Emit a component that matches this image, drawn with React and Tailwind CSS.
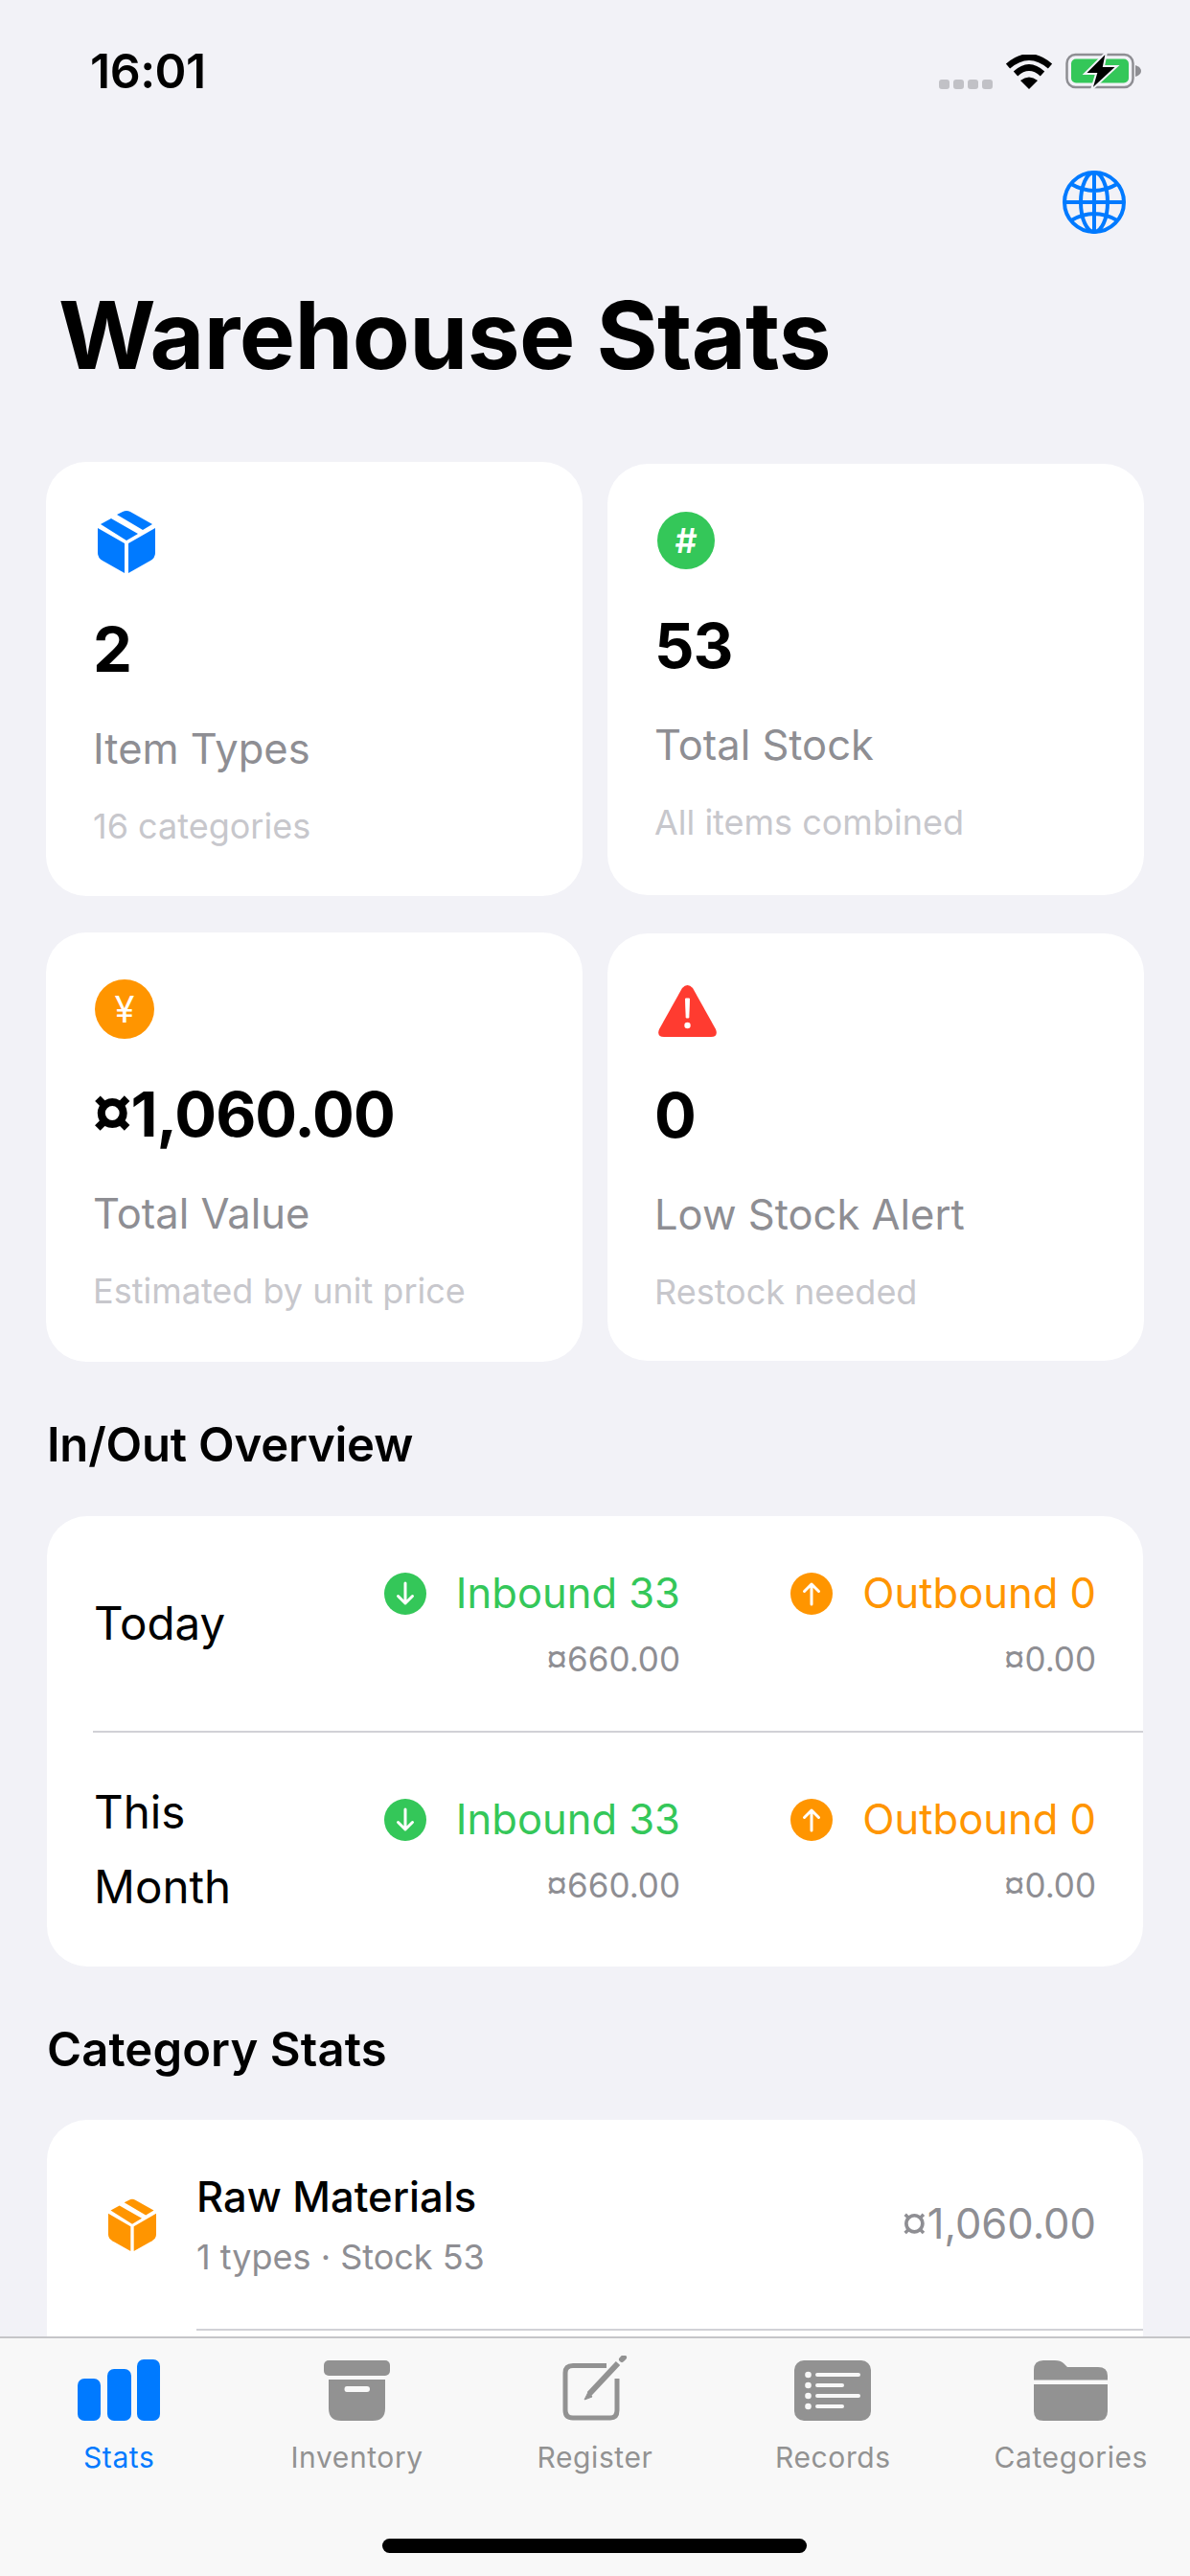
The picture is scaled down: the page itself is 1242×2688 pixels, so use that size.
import React from 'react'

const font = { fontFamily: 'Inter, "Liberation Sans", sans-serif' }

function Cur(){
  return <span className="text-[1.12em] leading-none" style={{ fontFamily: '"Liberation Sans", sans-serif' }}>¤</span>
}

function BoxIcon({ color, className }){
  return (
    <svg viewBox="0 0 60 66" className={className} fill={color}>
      <path d="M0 19 L28 35 V66 L5 53 Q0 50 0 45Z" />
      <path d="M32 35 L60 19 V45 Q60 50 55 53 L32 66Z" />
      <path d="M3 15 L14 9 L42 25 L30 32Z" />
      <path d="M20 5 L26 2 Q30 0 34 2 L57 15 L47 21Z" />
    </svg>
  )
}

function ArrowCircle({ up, color }){
  return (
    <svg viewBox="0 0 44 44" className="w-[44px] h-[44px] shrink-0">
      <circle cx="22" cy="22" r="22" fill={color} />
      {up
        ? <path d="M22 33 V12 M14.5 19.5 L22 12 L29.5 19.5" fill="none" stroke="#fff" strokeWidth="3" strokeLinecap="round" strokeLinejoin="round" />
        : <path d="M22 11 V32 M14.5 24.5 L22 32 L29.5 24.5" fill="none" stroke="#fff" strokeWidth="3" strokeLinecap="round" strokeLinejoin="round" />}
    </svg>
  )
}

function StatCard({ icon, value, label, sub, tall, className }){
  return (
    <div className={`w-[560px] bg-white rounded-[42px] pl-[49px] flex flex-col ${className}`}>
      <div className={`h-[66px] flex items-center ${tall ? 'mt-[50px]' : 'mt-[47px]'}`}>{icon}</div>
      <div className={`text-[65px] leading-[80px] font-bold text-black tracking-[-1px] ${tall ? 'mt-[40px]' : 'mt-[37px]'}`}>{value}</div>
      <div className="text-[43.5px] leading-[56px] text-[#8e8e93] mt-[35px]">{label}</div>
      <div className="text-[36px] leading-[44px] text-[#c7c7cc] mt-[31px]">{sub}</div>
    </div>
  )
}

function FlowCell({ up, text, amount, color, className }){
  return (
    <div className={`flex flex-col items-end ${className}`}>
      <div className="flex items-center h-[56px]">
        <ArrowCircle up={up} color={color} />
        <span className={`text-[43.5px] ml-[31px] ${up ? 'text-[#ff9500]' : 'text-[#34c759]'}`}>{text}</span>
      </div>
      <div className="text-[35px] leading-[44px] text-[#8e8e93] mt-[18px]"><Cur />{amount}</div>
    </div>
  )
}

function FlowRow({ label, labelClass }){
  return (
    <div className="flex items-center h-[118px] px-[49px]">
      <div className={`w-[180px] mr-auto text-[47.5px] text-black ${labelClass}`}>{label}</div>
      <FlowCell text="Inbound 33" amount="660.00" color="#34c759" />
      <FlowCell up text="Outbound 0" amount="0.00" color="#ff9500" className="w-[434px]" />
    </div>
  )
}

function Tab({ icon, label, active }){
  return (
    <div className="flex flex-col items-center">
      <div className="h-[76px] flex items-end">{icon}</div>
      <div className={`text-[30px] leading-[36px] mt-[20px] tracking-[0.6px] ${active ? 'text-[#007aff]' : 'text-[#929292]'}`}>{label}</div>
    </div>
  )
}

export default function App(){
  return (
    <div style={font} className="w-[1242px] h-[2688px] bg-[#f2f2f7] flex flex-col overflow-hidden">
      <div className="flex-1 min-h-0 overflow-hidden">
        {/* status bar */}
        <div className="h-[150px] flex items-start">
          <div className="ml-[94px] mt-[49px] text-[50px] leading-[50px] font-semibold text-black tracking-[-0.5px]">16:01</div>
          <div className="ml-auto mr-[50px] mt-[54px] flex items-end">
            <div className="flex gap-[4px] mb-[1px]">
              <div className="w-[11px] h-[10px] rounded-[3px] bg-[#c1c1c6]" />
              <div className="w-[11px] h-[10px] rounded-[3px] bg-[#c1c1c6]" />
              <div className="w-[11px] h-[10px] rounded-[3px] bg-[#c1c1c6]" />
              <div className="w-[11px] h-[10px] rounded-[3px] bg-[#c1c1c6]" />
            </div>
            <svg viewBox="0 0 48 36" className="w-[48px] h-[36px] ml-[14px] mb-[1px]">
              <path d="M2 12 Q24 -7 46 12" fill="none" stroke="#000" strokeWidth="6.5" />
              <path d="M10 20 Q24 7 38 20" fill="none" stroke="#000" strokeWidth="6.5" />
              <path d="M15 27 L24 36 L33 27 Q24 20 15 27Z" fill="#000" />
            </svg>
            <svg viewBox="0 0 80 40" className="w-[80px] h-[40px] ml-[14px]">
              <rect x="1.5" y="3" width="69" height="34" rx="9" fill="none" stroke="#8e8e93" strokeWidth="2.5" />
              <rect x="6" y="7.5" width="60" height="25" rx="5" fill="#34c759" />
              <path d="M73 14 Q79 16 79 20 Q79 24 73 26Z" fill="#8e8e93" />
              <path d="M43 0 L20 23 H32 L27 40 L54 15 H40Z" fill="#000" stroke="#f2f2f7" strokeWidth="2" />
            </svg>
          </div>
        </div>

        {/* globe */}
        <div className="h-[100px] flex justify-end pr-[67px] pt-[28px]">
          <svg viewBox="0 0 66 66" className="w-[66px] h-[66px]" fill="none" stroke="#007aff" strokeWidth="4">
            <circle cx="33" cy="33" r="31" />
            <ellipse cx="33" cy="33" rx="14" ry="31" />
            <path d="M33 2 V64 M2 33 H64 M9 14 Q33 28 57 14 M9 52 Q33 38 57 52" />
          </svg>
        </div>

        <h1 className="ml-[61px] mt-[42px] text-[98px] leading-[116px] font-bold text-black tracking-[-0.6px]">Warehouse Stats</h1>

        {/* stat cards */}
        <div className="mt-[74px] ml-[48px] flex flex-col gap-[38px]">
          <div className="flex items-center gap-[26px]">
            <StatCard
              tall
              className="h-[453px]"
              icon={<BoxIcon color="#007aff" className="w-[62px] h-[66px] ml-[4px]" />}
              value="2" label="Item Types" sub="16 categories" />
            <StatCard
              className="h-[450px]"
              icon={
                <div className="w-[60px] h-[60px] ml-[3px] rounded-full bg-[#34c759] flex items-center justify-center text-white text-[36px] font-semibold">#</div>
              }
              value="53" label="Total Stock" sub="All items combined" />
          </div>
          <div className="flex items-center gap-[26px]">
            <StatCard
              className="h-[448px]"
              icon={
                <div className="w-[62px] h-[62px] ml-[2px] rounded-full bg-[#ff9500] flex items-center justify-center text-white text-[38px] font-normal">¥</div>
              }
              value={<><Cur />1,060.00</>} label="Total Value" sub="Estimated by unit price" />
            <StatCard
              className="h-[446px]"
              icon={
                <svg viewBox="0 0 61 55" className="w-[61px] h-[55px] ml-[4px]">
                  <path d="M25 4 Q30.5 -2 36 4 L60 47 Q63 55 55 55 H6 Q-2 55 1 47Z" fill="#ff3b30" />
                  <path d="M28.5 15 H32.5 L31.8 35 H29.2Z" fill="#fff" stroke="#fff" strokeWidth="1" strokeLinejoin="round" />
                  <circle cx="30.5" cy="43" r="3.2" fill="#fff" />
                </svg>
              }
              value="0" label="Low Stock Alert" sub="Restock needed" />
          </div>
        </div>

        {/* in/out */}
        <h2 className="ml-[49px] mt-[57px] text-[49px] leading-[60px] font-semibold text-black tracking-[-0.2px]">In/Out Overview</h2>
        <div className="mx-[49px] mt-[44px] h-[470px] bg-white rounded-[42px] flex flex-col overflow-hidden">
          <div className="h-[224px] flex items-center"><div className="w-full"><FlowRow label="Today" /></div></div>
          <div className="ml-[48px] h-[2px] bg-[#d1d1d6]" />
          <div className="flex-1 flex items-center"><div className="w-full"><FlowRow label="This Month" labelClass="leading-[78px]" /></div></div>
        </div>

        {/* categories */}
        <h2 className="ml-[49px] mt-[57px] text-[49px] leading-[60px] font-semibold text-black tracking-[0.1px]">Category Stats</h2>
        <div className="mx-[49px] mt-[43px] h-[300px] bg-white rounded-t-[42px]">
          <div className="h-[218px] flex items-center pr-[49px]">
            <BoxIcon color="#ff9500" className="w-[52px] h-[55px] ml-[63px]" />
            <div className="ml-[41px] flex flex-col">
              <div className="text-[43.5px] leading-[52px] font-medium text-black">Raw Materials</div>
              <div className="text-[36px] leading-[44px] text-[#8e8e93] mt-[15px]">1 types · Stock 53</div>
            </div>
            <div className="ml-auto text-[43.5px] text-[#8e8e93]"><Cur />1,060.00</div>
          </div>
          <div className="ml-[156px] h-[2px] bg-[#d1d1d6]" />
        </div>
      </div>

      {/* tab bar */}
      <div className="relative h-[250px] shrink-0 bg-[#f8f8f8] border-t-2 border-[#c5c5c8] grid grid-cols-5 pt-[10px]">
        <Tab active label="Stats" icon={
          <svg viewBox="0 0 86 64" className="w-[86px] h-[64px]" fill="#007aff">
            <rect x="0" y="20" width="24" height="44" rx="7" />
            <rect x="31" y="10" width="25" height="54" rx="7" />
            <rect x="62" y="0" width="24" height="64" rx="7" />
          </svg>
        } />
        <Tab label="Inventory" icon={
          <svg viewBox="0 0 69 63" className="w-[69px] h-[63px]" fill="#929292">
            <rect x="0" y="0" width="69" height="16" rx="5" />
            <path fillRule="evenodd" d="M5 20 H64 V50 Q64 63 51 63 H18 Q5 63 5 50Z M24 27 Q21.5 27 21.5 30 Q21.5 33 24 33 H45 Q48 33 48 30 Q48 27 45 27Z" />
          </svg>
        } />
        <Tab label="Register" icon={
          <svg viewBox="0 0 68 68" className="w-[68px] h-[68px]" fill="none" stroke="#929292">
            <path d="M46 10.5 H11 Q3 10.5 3 18 V57 Q3 65 11 65 H50 Q57 65 57 57 V24" strokeWidth="5" />
            <path d="M28 40 L58 8" strokeWidth="6" />
            <path d="M27 38 L23 46 L31 43Z" fill="#929292" strokeWidth="1" />
            <path d="M62 4 L64 2" strokeWidth="6" strokeLinecap="round" />
          </svg>
        } />
        <Tab label="Records" icon={
          <svg viewBox="0 0 80 63" className="w-[80px] h-[63px]">
            <rect width="80" height="63" rx="10" fill="#929292" />
            <g fill="#f8f8f8">
              <circle cx="14.5" cy="15" r="3.3" />
              <circle cx="14.5" cy="26" r="3.3" />
              <circle cx="14.5" cy="37" r="3.3" />
              <circle cx="14.5" cy="48" r="3.3" />
            </g>
            <path d="M24 15 H67 M24 26 H50 M24 37 H67 M24 48 H50" stroke="#f8f8f8" strokeWidth="4" strokeLinecap="round" />
          </svg>
        } />
        <Tab label="Categories" icon={
          <svg viewBox="0 0 77 63" className="w-[77px] h-[63px]" fill="#929292">
            <path d="M0 20.5 V10 Q0 0 10 0 H22 Q28 0 31 3 L35 7 H67 Q77 7 77 16 V20.5Z" />
            <path d="M0 25 H77 V53 Q77 63 67 63 H10 Q0 63 0 53Z" />
          </svg>
        } />
        <div className="absolute left-[399px] top-[209px] w-[443px] h-[15px] rounded-full bg-black" />
      </div>
    </div>
  )
}
